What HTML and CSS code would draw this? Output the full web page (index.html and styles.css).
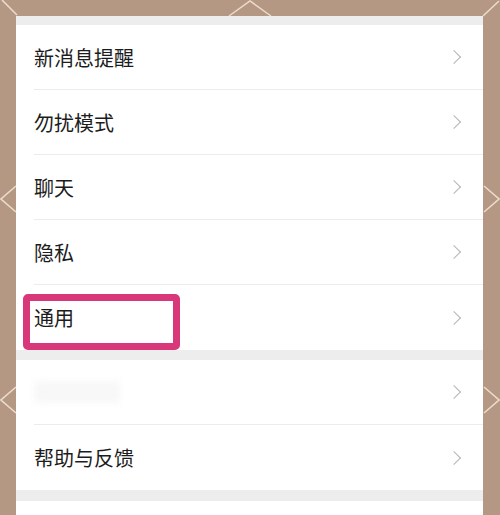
FILE: index.html
```html
<!DOCTYPE html>
<html lang="zh-CN">

<head>
    <meta charset="UTF-8">
    <meta name="viewport" content="width=device-width, initial-scale=1.0">
    <title>设置</title>
    <link rel="stylesheet" href="styles.css">
</head>

<body>

    <!-- 背景上的花纹线条 -->
    <svg class="pattern" width="500" height="515" viewBox="0 0 500 515">
        <g fill="none" stroke="#eddccd" stroke-width="1.5">
            <path d="M229 16 L250 1 L271 16" />
            <path d="M2 0 L17 15" />
            <path d="M483 16 L499 1" />
            <path d="M16 186 L1 199 L16 212" />
            <path d="M484 186 L499 199 L484 212" />
            <path d="M16 387 L1 400 L16 413" />
            <path d="M484 387 L499 400 L484 413" />
        </g>
    </svg>

    <div class="panel">
        <div class="gap gap-top"></div>

        <div class="group">
            <div class="row"><span class="label">新消息提醒</span><span class="arrow"></span></div>
            <div class="row"><span class="label">勿扰模式</span><span class="arrow"></span></div>
            <div class="row"><span class="label">聊天</span><span class="arrow"></span></div>
            <div class="row"><span class="label">隐私</span><span class="arrow"></span></div>
            <div class="row last"><span class="label">通用</span><span class="arrow"></span></div>
            <div class="mark"></div>
        </div>

        <div class="gap"></div>

        <div class="group">
            <div class="row"><span class="label blurred"></span><span class="arrow"></span></div>
            <div class="row last"><span class="label">帮助与反馈</span><span class="arrow"></span></div>
        </div>

        <div class="gap gap-bottom"></div>

        <div class="group">
            <div class="row last"></div>
        </div>
    </div>

</body>

</html>
```

FILE: styles.css
```css
html {
    overflow: hidden;
}

body {
    margin: 0;
    padding: 16px 17px 0 16px;
    background-color: #b49884;
    font-family: 'Noto Sans CJK SC', 'Noto Sans', sans-serif;
    height: 515px;
    box-sizing: border-box;
    overflow: hidden;
    position: relative;
}

.pattern {
    position: absolute;
    left: 0;
    top: 0;
}

.panel {
    position: relative;
    background-color: #ffffff;
    height: 499px;
    overflow: hidden;
}

.gap {
    height: 10px;
    background-color: #ededed;
}

.gap-top {
    height: 9px;
}

.gap-bottom {
    height: 11px;
}

.group {
    position: relative;
    padding-left: 18px;
}

.row {
    height: 64px;
    border-bottom: 1px solid #ececec;
    display: flex;
    align-items: center;
    justify-content: space-between;
    padding-right: 22px;
}

.row.last {
    height: 65px;
    border-bottom: none;
}

.label {
    font-size: 20px;
    color: #1c1c1c;
    letter-spacing: 0;
}

.blurred {
    width: 86px;
    height: 22px;
    background-color: #f8f8f8;
    filter: blur(3px);
}

.arrow {
    width: 9px;
    height: 9px;
    border-top: 1.5px solid #b4b4b4;
    border-right: 1.5px solid #b4b4b4;
    transform: rotate(45deg);
    margin-right: 2px;
}

.mark {
    position: absolute;
    left: 7px;
    top: 269px;
    width: 157px;
    height: 56px;
    border: 7px solid #d8387a;
    border-radius: 5px;
    box-sizing: border-box;
}
```
